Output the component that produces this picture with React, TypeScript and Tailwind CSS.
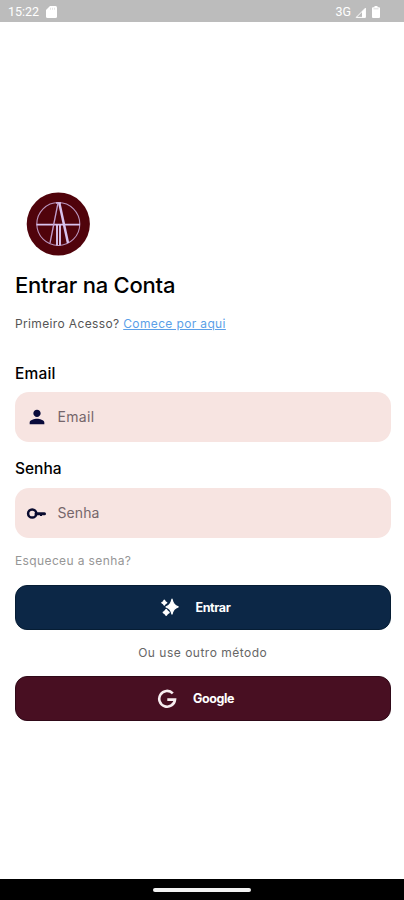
import type { ReactNode } from "react";

function StatusBar() {
  return (
    <header className="flex h-[22px] shrink-0 items-center justify-between bg-[#bcbcbc] pl-2 pr-[24px] pt-[2px] text-white">
      <div className="flex items-center gap-[7px]">
        <span className="font-[Roboto] text-[12.5px] leading-none">15:22</span>
        <svg width="11" height="12" viewBox="0 0 11 12" fill="currentColor">
          <path d="M4 0h5.5Q11 0 11 1.500v9Q11 12 9.500 12h-8Q0 12 0 10.500V4z" />
          <path d="M4.500 1.800v2M6.500 1.800v2M8.500 1.800v2" stroke="#d8d8d8" strokeWidth=".7" />
        </svg>
      </div>
      <div className="flex items-center">
        <span className="font-[Roboto] text-[12.5px] leading-none">3G</span>
        <svg className="ml-[4px]" width="11" height="11" viewBox="0 0 11 11" fill="none" stroke="currentColor">
          <path d="M1.200 10.400H10.400V1.200z" />
          <path d="M7 4.500 10.400 1.200V10.400H7z" fill="currentColor" stroke="none" />
        </svg>
        <svg className="ml-[6px]" width="8" height="12" viewBox="0 0 8 12" fill="currentColor">
          <path d="M2.500 0h3v1.200H7q1 0 1 1V11q0 1-1 1H1q-1 0-1-1V2.200q0-1 1-1h1.500z" />
          <path d="M1.500 2.800h5" stroke="#d0d0d0" strokeWidth=".8" />
        </svg>
      </div>
    </header>
  );
}

function Logo() {
  return (
    <svg className="ml-[11px] block" width="64" height="64" viewBox="0 0 64 64" fill="none" stroke="#d9c3ee">
      <circle cx="32.300" cy="32" r="31.600" fill="#50030b" stroke="none" />
      <circle cx="32.300" cy="32" r="21.500" strokeWidth="1.100" stroke="#b994bd" />
      <path d="M10.500 32.600H54" strokeWidth="1.600" />
      <path d="M30 11h5" strokeWidth="1.400" />
      <path d="M32 11 24 51" strokeWidth="1.300" stroke="#c2a0d0" />
      <path d="M33.300 11 42 51" strokeWidth="2.500" />
      <path d="M31 33v20.500M34 33v20.500" strokeWidth="1.900" />
    </svg>
  );
}

function PersonIcon() {
  return (
    <svg width="22" height="22" viewBox="0 0 24 24" fill="#090b3b">
      <path d="M12 12c2.210 0 4-1.790 4-4s-1.790-4-4-4-4 1.790-4 4 1.790 4 4 4zm0 2c-2.670 0-8 1.340-8 4v2h16v-2c0-2.660-5.330-4-8-4z" />
    </svg>
  );
}

function KeyIcon() {
  return (
    <svg width="22" height="22" viewBox="0 0 22 22" fill="none" stroke="#090b2f">
      <circle cx="6.200" cy="11.500" r="4.100" strokeWidth="2.500" />
      <path d="M10 11.700H18.500" strokeWidth="3" strokeLinecap="round" />
      <path d="M15 11.500v2.400" strokeWidth="2" />
    </svg>
  );
}

function SparkleIcon() {
  return (
    <svg width="18" height="18" viewBox="0 0 18 18" fill="#fff">
      <path d="M11 1.200Q12.300 7.500 17.200 8.800 12.300 10.100 11 16.200 9.700 10.100 5 8.800 9.700 7.500 11 1.200z" stroke="#fff" strokeWidth="1.200" strokeLinejoin="round" />
      <path d="M3.300 2.200 4.300 3.700 5.800 4.700 4.300 5.700 3.300 7.200 2.300 5.700.8 4.700 2.300 3.700z" stroke="#fff" strokeWidth="1.200" strokeLinejoin="round" />
      <path d="M5.200 11.800 6.300 13.300 7.800 14.400 6.300 15.500 5.200 17 4.100 15.500 2.600 14.400 4.100 13.300z" stroke="#fff" strokeWidth="1.900" strokeLinejoin="round" />
    </svg>
  );
}

function GoogleIcon() {
  return (
    <svg width="20" height="20" viewBox="0 0 20 20" fill="none" stroke="#f7edf0" strokeWidth="2.600">
      <path d="M15.800 4.300A7.900 7.900 0 1 0 18 10.600H10.300" />
    </svg>
  );
}

function Field({ icon, children }: { icon: ReactNode; children: ReactNode }) {
  return (
    <div className="flex h-[50px] items-center rounded-[14px] bg-[#f7e4e1] pl-[10.500px] text-[14px] text-[#75666b]">
      {icon}
      <span className="ml-[10px] -mt-px">{children}</span>
    </div>
  );
}

export default function App() {
  return (
    <div className="flex h-[900px] w-[404px] flex-col overflow-hidden bg-white font-[Inter,sans-serif] text-black">
      <StatusBar />
      <main className="flex flex-1 flex-col pl-[15px] pr-[13.5px] pt-[170px]">
        <Logo />
        <h1 className="mt-[14px] text-[22px] font-medium leading-[30px] tracking-[-0.23px]">Entrar na Conta</h1>
        <p className="mt-[15px] text-[12px] leading-[18px] tracking-[0.36px] text-[#555]">
          Primeiro Acesso?{" "}
          <a className="text-[#5b9fe8] underline">Comece por aqui</a>
        </p>
        <label className="mt-[31px] text-[15.500px] font-medium leading-[20px] tracking-[0.2px]">Email</label>
        <div className="mt-[8px]">
          <Field icon={<PersonIcon />}><span className="tracking-[0.3px]">Email</span></Field>
        </div>
        <label className="mt-[17px] text-[15.500px] font-medium leading-[20px]">Senha</label>
        <div className="mt-[8.500px]">
          <Field icon={<KeyIcon />}><span className="tracking-[0.1px]">Senha</span></Field>
        </div>
        <a className="mt-[14.500px] text-[12px] leading-[18px] tracking-[0.38px] text-[#969696]">Esqueceu a senha?</a>
        <button className="mt-[14.500px] flex h-[45px] shrink-0 items-center rounded-[12px] border border-[#061d34] bg-[#0c2746] pl-[145px] text-[12.500px] font-bold tracking-[-0.4px] text-white">
          <SparkleIcon />
          <span className="ml-[16.500px] mt-[2px]">Entrar</span>
        </button>
        <p className="mt-[14px] text-center text-[12px] leading-[18px] tracking-[0.5px] text-[#666]">Ou use outro método</p>
        <button className="mt-[14.500px] flex h-[45px] shrink-0 items-center rounded-[12px] border border-[#300918] bg-[#480f22] pl-[141px] text-[12.500px] font-bold tracking-[-0.4px] text-white">
          <GoogleIcon />
          <span className="ml-[16px] mt-px">Google</span>
        </button>
      </main>
      <footer className="flex h-[21px] shrink-0 items-center justify-center bg-black">
        <div className="h-1 w-[98px] rounded-full bg-[#f2f2f2]" />
      </footer>
    </div>
  );
}
